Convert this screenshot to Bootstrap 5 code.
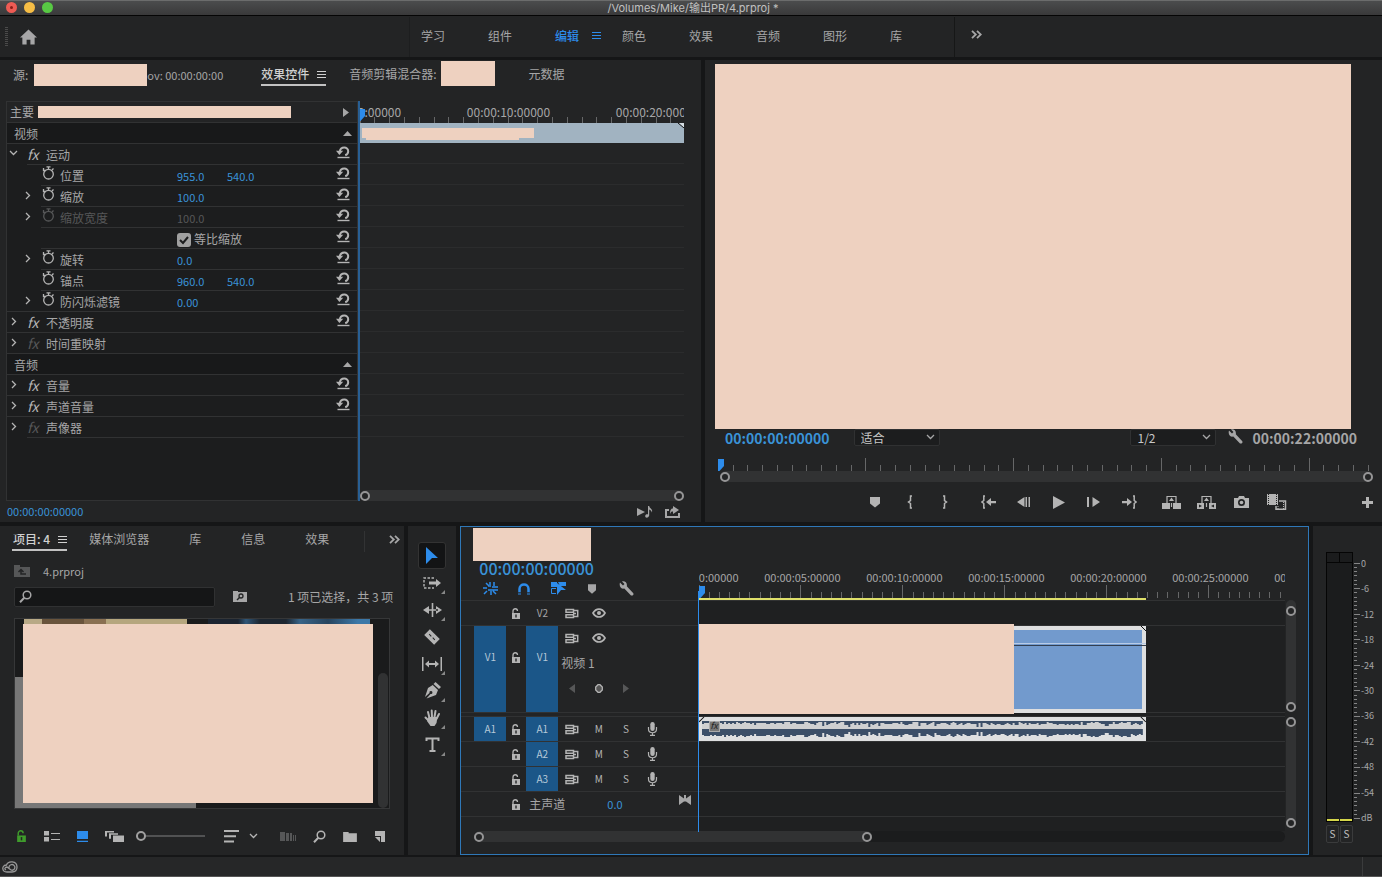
<!DOCTYPE html>
<html lang="zh-CN" data-bs-theme="dark">
<head>
<meta charset="utf-8">
<meta name="viewport" content="width=device-width, initial-scale=1">
<title>4.prproj</title>
<link href="https://cdn.jsdelivr.net/npm/bootstrap@5.3.0/dist/css/bootstrap.min.css" rel="stylesheet">
<style>
:root{--panel:#232425;--gap:#151617;--list:#1c1d1e;--line:#313233;--txt:#a6a6a7;--blue:#2d8ceb;--tc:#3a93d8;--peach:#eed1c0}
body{font:12px/20px "Noto Sans CJK SC","Noto Sans",sans-serif;background:var(--gap);color:var(--txt);min-height:100vh}
button,.tab-link{background:none;border:0;padding:0;color:inherit;font:inherit;line-height:inherit;text-decoration:none;white-space:nowrap;display:inline-flex;align-items:center;justify-content:center}
svg{display:block;flex:none;fill:currentColor}
.ln{fill:none;stroke:currentColor}
.pane{background:var(--panel);min-width:0}
.hide-box{background:var(--peach);display:block;flex:none}
.text-blue{color:var(--blue)}
.head-mark{position:absolute;color:var(--blue);z-index:2}
.ticks{width:100%;stroke:#666768;shape-rendering:crispEdges}
.sbar{height:11px;background:#313233;border-radius:6px}
.knob{width:10px;height:10px;border:2px solid #959596;border-radius:50%;background:var(--panel);display:block;flex:none}
.rule-lab{display:grid;grid-auto-flow:column;justify-items:center;white-space:nowrap}

/* title bar and workspaces */
.title-bar{height:16px;background:linear-gradient(#4b4c4d,#39393a);border-top:1px solid #6b6c6c;border-bottom:1px solid #050505;font-family:Inter,"Noto Sans CJK SC",sans-serif;font-size:11px;line-height:14px;color:#c0c0c0;padding-left:4px}
.dots{position:absolute;left:6px;top:1px;gap:7px}
.dots i{width:11px;height:11px;border-radius:50%;background:#ee5b54}
.dots i:nth-child(2){background:#f6bd45}.dots i:nth-child(3){background:#58c944}
.dots i:first-child{border:4px solid #ee5b54;background:#8d1d17}
.work-bar{height:41px;margin-bottom:3px}
.work-bar .grip{width:3px;height:20px;margin-left:5px;background:repeating-linear-gradient(#4a4a4a 0 1px,transparent 1px 2px)}
.work-list{margin-left:372px;border-left:1px solid #1d1e1f;border-right:1px solid #161717;padding-left:11px;height:40px;width:546px}
.work-list .tab-link{width:67px;flex:0 0 67px;justify-content:flex-start;height:38px;padding-bottom:2px}
.work-list .cur{color:var(--blue);font-weight:500}
.cur svg{margin-left:13px}
.w-more{height:38px}

/* upper row */
.upper{flex:7 0 462px;gap:4px}
.lower{flex:5 0 329px;gap:4px;margin-top:4px}
.fx-pane{flex:701 1 0}.prog-pane{flex:677 1 0}
.tabs{height:41px;padding-top:4px}
.under{border-bottom:2px solid #c2c2c2;color:#d0d0d0;height:22px;font-weight:500}
.t1{padding-left:13px}.t2{margin-left:38px}.t3{margin-left:23px;height:20px}.t4{margin-left:34px}
#rb1{width:113px;height:22px;margin-left:6px}
#rb2{width:54px;height:25px;margin:-3px 0 -2px 4px}
#rb3{width:253px;height:12px;margin-left:4px}
#rb4{width:118px;height:33px;margin:1px 0 0 12px}
.small-tc{font-size:11px}
.prop-list{width:352px;flex:none;margin-left:6px;background:var(--list);border:1px solid var(--line)}
.prop-head{height:21px;border-bottom:1px solid var(--line);background:var(--panel);padding:0 8px 0 3px}
.sec{background:#18191a;height:21px;border-bottom:1px solid var(--line);padding:1px 5px 0 7px}
.prop{height:21px;border-bottom:1px solid transparent}
.prop.full{border-color:var(--line)}
.prop.cut{border:0}
.prop.cut .prop-in{border-bottom:1px solid var(--line)}
.prop>.tw{width:20px;height:18px;padding-right:7px;color:#b4b4b4;flex:none}
.prop.sub>.tw{width:34px;padding:0 0 0 7px}
.prop-in{flex:1;height:21px;padding:1px 7px 0 0;line-height:20px}
.prop-in>.ic{width:19px;flex:none;color:#b4b4b4;font-style:italic;font-size:14px;line-height:18px}
.sub .prop-in>.ic{padding-left:1px}
.prop-in .nm{width:117px}
.prop-in .val{width:50px;font-size:11px;color:var(--tc);line-height:20px}
.prop-in .rst{margin-left:auto;height:14px;color:#b4b4b4}
.dim,.prop-in>.dim,.prop-in .val.dim{color:#565758}
.chk{width:14px;height:14px;margin:4px 3px 0 0;border:0;border-radius:2px;background-color:#a0a0a0!important;float:none}
.chk:checked{background-image:url("data:image/svg+xml,%3Csvg xmlns='http://www.w3.org/2000/svg' viewBox='0 0 14 14'%3E%3Cpath d='M3 7l3 3 5-6' fill='none' stroke='%231c1d1e' stroke-width='2'/%3E%3C/svg%3E")}
.fx-time{margin-right:17px;position:relative;border-left:2px solid #285f94}
.fx-lab{grid-auto-columns:149px;height:14px;line-height:21px;margin-left:-75px}
.fx-clip{height:20px;background:#a1b3c1;padding:5px 0 0 2px;position:relative}
.fx-clip .nick{position:absolute;right:0;top:0}
.fx-rows{flex:1;background:repeating-linear-gradient(transparent 0 20px,#2b2c2d 20px 21px) 0 0/100% 294px no-repeat}
.fx-foot{height:21px;color:var(--tc);font-size:11px;padding:0 21px 0 7px}
.fx-foot button{color:#a6a6a7}
#hm1{left:-1px;top:7px}#hm2{left:-2px;top:2px}#hm3{left:0;bottom:2px}
.screen{flex:1;background:var(--peach);margin:4px 31px 0 10px;min-height:120px}
.bigc{font-weight:700;font-size:14px;line-height:18px}
.sel{height:17px;width:86px;background:#1c1d1e;border:1px solid #303132;border-radius:2px;padding:0 6px;appearance:none;font-size:12px;line-height:15px;color:#c8c8c8;display:block}
.sel-box{position:relative}.sel-box svg{position:absolute;right:5px;top:5px;pointer-events:none}
.seq-col{color:var(--tc);padding-left:20px}
.s1{margin-left:24px}
.prog-row{height:18px;padding-right:25px}
.wr{margin:0 9px 0 12px}
.prog-rule{margin:10px 9px 0 15px}
.trans{height:40px;padding-left:152px}
.trans button{width:35px;height:20px;color:#b4b4b4}
.trans .plus{width:30px}.g8{margin-right:8px}.g9{margin-right:9px}

/* project panel */
.proj{flex:405 1 0}
.p-tabs{padding:3px 4px 0 12px;height:34px}
.p-tabs .pt1{padding-left:1px;margin-right:22px;height:22px}
.pt3{margin-left:40px}.p-more{height:20px}.p-line{width:1px;height:21px;background:#323334;margin:2px 24px 0 auto}
.crumb{padding-left:14px;height:22px}.crumb span{margin-left:13px;font-size:11px}
.find-row{padding:0 11px 0 14px;height:29px;margin-bottom:7px}
.find{width:201px;height:20px;background:#151617;border:1px solid #303132;border-radius:2px}
.find input{background:none;border:0;outline:0;width:170px;color:inherit;height:18px}
.fb{margin-left:18px}
.bin{margin:0 14px;border:1px solid #363738;flex:1;background:#1a1b1c}
.thumbs{height:5px;padding-left:9px}
.th-a{width:163px;height:5px;background:linear-gradient(90deg,#b8a986 0 18px,#69543c 18px 60px,#897052 60px 82px,#b5a67e 82px)}
.th-b{width:162px;height:5px;margin-left:21px;background:linear-gradient(90deg,#1b2430 0 30px,#2f5678 38px,#1d2630 52px 78px,#386488 92px,#27445e 120px,#3c78a8 150px)}
.bin-body{flex:1;background:linear-gradient(#777,#777) 0 53px/8px 100% no-repeat,linear-gradient(#777,#777) 0 100%/181px 5px no-repeat;padding:0 16px 5px 8px;position:relative}
.bin-thumb{position:absolute;right:1px;top:49px;bottom:0;width:10px;border-radius:5px;background:#313233}
.proj-foot{height:46px;padding:8px 19px 0 16px;color:#b4b4b4}
.f-lock{color:#3f9b2c}.fb1,.fb2,.fb4{margin-left:17px}.fb3{margin-left:10px}
.rng{width:69px;height:12px;appearance:none;background:none;margin:0 19px 0 12px}
.rng::-webkit-slider-runnable-track{height:2px;background:#515253}
.rng::-webkit-slider-thumb{appearance:none;width:10px;height:10px;border:2px solid #a0a0a0;border-radius:50%;background:var(--panel);margin-top:-4px}

/* tools */
.toolz{width:48px;flex:none;padding-top:16px}
.toolz button{width:28px;height:27px;color:#b4b4b4;position:relative;border-radius:3px}
.toolz button:not(.on)::after{content:"";position:absolute;right:1px;bottom:2px;border:solid transparent;border-width:2px;border-right-color:#888;border-bottom-color:#888}
.toolz .nt::after{display:none}
.toolz .on{background:#131415;border:1px solid #333;color:var(--blue)}

/* timeline */
.seq{flex:848 1 0;border:1px solid #2f78b8}
.seq-top{height:73px}
.seq-left{width:238px;flex:none}
.seq-tc{font-size:16px;line-height:14px;color:var(--tc);font-weight:500;padding-left:18px}
.seq-btns{padding:6px 0 0 12px}
.seq-btns button{width:34px;height:15px}
.rulez{margin-right:23px}
.tl-lab{grid-auto-columns:102px;margin-left:-50px;font-size:11px;line-height:14px}
.workarea{height:2px;width:76.3%;background:#dfe06a}
.tracks,.lanes{border-top:1px solid var(--line)}
.trk{border-bottom:1px solid var(--line);height:25px}
.tracks .trk{padding-left:13px}
.trk.tall{height:87px}
.trk .cell{width:32px;flex:none;font-size:10px}
.trk .patch{background:#1b5688;color:#b6c9d8;align-self:stretch}
.trk .lock{width:20px;flex:none;color:#b4b4b4}
.trk .b27{width:27px;flex:none;color:#b4b4b4;font-size:10px}
.sep-v{height:4px;border-bottom:1px solid var(--line)}
.v1c{padding-bottom:12px}.v1r{height:24px}.v1n{padding-left:3px;line-height:18px}
.mst{padding-left:3px;width:81px}.mval{color:var(--tc);font-size:11px}.mend{margin:-8px 8px 0 0}
.lanes{background:#1f2021;flex:1;min-width:0}
.phead{position:absolute;left:-1px;top:-10px;width:1px;bottom:-1px;background:var(--blue);z-index:3}
.clip-v{width:76.3%;height:87px;background:#729acd;border:4px solid #dedfe0;position:relative;border-left:0}
.clip-v::after{content:"";position:absolute;left:0;right:-4px;top:13px;height:3px;border-top:1px solid #b8cbe6;border-bottom:1px solid #333f50}
.clip-v .hide-box{position:absolute;left:0;top:-6px;width:315px;height:90px;z-index:1}
.corner{position:absolute;right:-4px;top:-4px}
.clip-a{width:76.3%;height:24px;background:#dedfe0}
.fxb{position:absolute;left:10px;top:4px;width:11px;height:11px;border:1px solid #aaa;background:#777;color:#222;font-size:9px;line-height:8px;font-style:italic}
.vcol{width:12px;flex:none;margin:0 11px 0 0}
.vsb{width:10px;background:#313233;border-radius:5px;margin:0 auto}
.v1s{height:112px;padding-top:6px}.v2s{height:111px;margin-top:5px}
.hsb{margin:0 23px 12px 13px;border-radius:6px;background:#1b1c1d}
.hthumb{width:49%}

/* meters and status */
.meter{width:69px;flex:none}
.mbox{padding:26px 0 0 13px}
.peak{width:27px;height:11px;border:1px solid #050505;background:#1b1c1d}.peak i{flex:1}.peak i:first-child{border-right:1px solid #050505}
.mtr{width:27px;flex:1;border:1px solid #050505;background:#1b1c1d;border-top:0}
.mtr i{flex:1;height:2px;background:#d5d64a}.mtr i+i{margin-left:1px}
#mticks{stroke:#858586;shape-rendering:crispEdges}
.mtr-lab{font-size:9px;line-height:10px;position:relative;flex:1;margin-left:1px}
.mtr-lab span{position:absolute;left:0;white-space:nowrap;transform:translateY(-50%)}
.solo{padding:3px 0 12px 13px;gap:1px}
.solo button{width:13px;height:18px;border:1px solid #3a3b3c;border-radius:2px;font-size:10px;color:#c0c0c0}
.status{height:20px;margin-top:2px;background:#262728;border-bottom:1px solid #555;padding-left:2px;color:#999}
.st-sep{margin:0 19px 0 auto;width:1px;height:19px;background:#3a3b3c}
</style>
</head>
<body class="d-flex flex-column">
<svg width="0" height="0" class="position-absolute" aria-hidden="true">
<symbol id="menu" viewBox="0 0 9 9"><path class="ln" d="M0 1.500h9M0 4.500h9M0 7.500h9"/></symbol>
<symbol id="more" viewBox="0 0 11 9"><path class="ln" stroke-width="1.800" d="M1 .8l3.800 3.700L1 8.200M6 .8l3.800 3.700L6 8.200"/></symbol>
<symbol id="cr" viewBox="0 0 6 9"><path class="ln" stroke-width="1.300" d="M1 1l3.500 3.500L1 8"/></symbol>
<symbol id="cd" viewBox="0 0 9 6"><path class="ln" stroke-width="1.300" d="M1 1l3.500 3.500L8 1"/></symbol>
<symbol id="watch" viewBox="0 0 13 14"><path class="ln" stroke-width="1.300" d="M4.500 .8h4M6.500 1v2M1.500 2v2.500h2M11.500 2.500l-1.500 1.500"/><circle class="ln" stroke-width="1.300" cx="6.500" cy="8.200" r="4.800"/></symbol>
<symbol id="rst" viewBox="0 0 14 13"><path class="ln" stroke-width="2" d="M3.800 5.500C4.500 .3 12.200 .3 12.200 5.200c0 2-1 3.300-3 4"/><path d="M0 4.800h7.200L3.400 9z"/><path d="M1.500 10.800h12v1.400h-12z"/></symbol>
<symbol id="wrench" viewBox="0 0 15 15"><path d="M1 1.500l3 3L5.500 3 3 .5C6 -.3 8.500 2 7.800 5.200l6.500 7c.8 1.500-1 3-2.300 2.200L5.300 7.600C2.500 8.500-.3 5.500 1 1.500z"/></symbol>
<symbol id="mark" viewBox="0 0 10 12"><path d="M0 1h10v6.500L5 11.500 0 7.500z"/></symbol>
<symbol id="pin" viewBox="0 0 7 12"><path d="M0 0h6v7l-4.500 5H0z"/></symbol>
<symbol id="mag" viewBox="0 0 13 13"><circle class="ln" stroke-width="1.500" cx="8" cy="5" r="3.800"/><path class="ln" stroke-width="2" d="M5.300 7.800L1 12.200"/></symbol>
<symbol id="lock" viewBox="0 0 10 11"><path d="M1 5h8v6H1z"/><path class="ln" stroke-width="1.300" d="M2 5V3c0-3 4.500-3 4.500 0"/><path fill="#232425" d="M4.300 6.500h1.400v3H4.300z"/></symbol>
<symbol id="sync" viewBox="0 0 14 11"><path class="ln" stroke-width="1.500" d="M1 1.500h7.500v2.800H1zM1 6.700h7.500v2.800H1zM8 5.500h3M9 2.500h3.700v6H9"/></symbol>
<symbol id="eye" viewBox="0 0 14 10"><path class="ln" stroke-width="1.700" d="M1 5C4-.3 10-.3 13 5 10 10.300 4 10.300 1 5z"/><circle cx="7" cy="5" r="2"/></symbol>
<symbol id="mic" viewBox="0 0 11 14"><rect x="3.300" y="0" width="4.400" height="9" rx="2.200"/><path class="ln" stroke-width="1.200" d="M1.500 5v2c0 5 8 5 8 0V5M5.500 11v2M3 13.400h5"/></symbol>
<symbol id="folder" viewBox="0 0 15 12"><path d="M0 1h6v1.500h9V12H0z"/></symbol>
</svg>

<header class="title-bar position-relative text-center">
  <div class="dots d-flex"><i></i><i></i><i></i></div>
  <span>/Volumes/Mike/输出PR/4.prproj *</span>
</header>

<nav class="work-bar pane d-flex align-items-center">
  <span class="grip"></span>
  <button class="ms-2" aria-label="主页"><svg class="ms-1" width="17" height="16" viewBox="0 0 18 16"><path d="M9 0l9 8.500h-2.500V16h-4.500v-5H7v5H2.500V8.500H0z"/></svg></button>
  <div class="work-list d-flex align-items-center">
    <a class="tab-link" href="#">学习</a><a class="tab-link" href="#">组件</a>
    <a class="tab-link cur" href="#">编辑<svg width="9" height="9"><use href="#menu"/></svg></a>
    <a class="tab-link" href="#">颜色</a><a class="tab-link" href="#">效果</a><a class="tab-link" href="#">音频</a><a class="tab-link" href="#">图形</a><a class="tab-link" href="#">库</a>
  </div>
  <button class="ms-3 w-more" aria-label="更多"><svg class="mb-1" width="11" height="9"><use href="#more"/></svg></button>
</nav>

<main class="upper d-flex">
  <section class="fx-pane pane d-flex flex-column">
    <div class="tabs d-flex align-items-start">
      <a class="tab-link t1" href="#">源:<span class="hide-box" id="rb1"></span><span class="small-tc">ov: 00:00:00:00</span></a>
      <a class="tab-link under t2" href="#">效果控件<svg class="ms-2" width="9" height="9"><use href="#menu"/></svg></a>
      <a class="tab-link t3" href="#">音频剪辑混合器:<span class="hide-box" id="rb2"></span></a>
      <a class="tab-link t4" href="#">元数据</a>
    </div>
    <div class="d-flex flex-grow-1">
      <div class="prop-list">
        <div class="prop-head d-flex align-items-center">主要<span class="hide-box" id="rb3"></span><svg class="ms-auto" width="6" height="9" viewBox="0 0 6 9"><path d="M0 0l6 4.500L0 9z"/></svg></div>
        <div class="sec d-flex align-items-center">视频<svg class="ms-auto" width="9" height="5" viewBox="0 0 9 5"><path d="M4.500 0L9 5H0z"/></svg></div>
        <div id="vprops"></div>
        <div class="sec d-flex align-items-center">音频<svg class="ms-auto" width="9" height="5" viewBox="0 0 9 5"><path d="M4.500 0L9 5H0z"/></svg></div>
        <div id="aprops"></div>
      </div>
      <div class="fx-time flex-grow-1 d-flex flex-column overflow-hidden">
        <svg class="head-mark" id="hm1" width="7" height="14"><use href="#pin"/></svg>
        <div class="rule-lab fx-lab"><span>00:00:00:00000</span><span>00:00:10:00000</span><span>00:00:20:00000</span></div>
        <svg class="ticks" height="8" data-start="0" data-step="14.800" data-total="324" data-major="0"></svg>
        <div class="fx-clip"><svg width="172" height="12"><path fill="#eed1c0" d="M0 0h172v10h-15v2H4v-2H0z"/></svg><svg class="nick" width="6" height="5" viewBox="0 0 6 5"><path fill="#d5dde2" d="M1 0h5v5z"/><path stroke="#111" d="M0 0l6 5"/></svg></div>
        <div class="fx-rows"></div>
        <div class="sbar d-flex justify-content-between align-items-center"><span class="knob"></span><span class="knob"></span></div>
      </div>
    </div>
    <div class="fx-foot d-flex justify-content-between"><span>00:00:00:00000</span>
      <span class="d-flex gap-2 align-items-center">
        <button aria-label="播放音频"><svg width="16" height="12" viewBox="0 0 16 12"><path d="M0 2l8 4-8 4zM11 0h1.200c0 2.500 4.300 3 2.500 6.500 0-2-1.500-2.500-2.500-3v6c-1 3-4 2.500-4 .8s1.500-2.300 2.800-1.800z"/></svg></button>
        <button class="ms-1" aria-label="导出"><svg width="15" height="12" viewBox="0 0 15 12"><path class="ln" stroke-width="2" d="M4 4H1v7h13V7"/><path d="M8 0l6 4-6 4V5.500C6 5.500 6 6 5 8c0-4 1-5.500 3-5.500z"/></svg></button>
      </span></div>
  </section>

  <section class="prog-pane pane d-flex flex-column">
    <div class="screen"></div>
    <div class="d-flex align-items-start prog-row">
      <span class="bigc seq-col">00:00:00:00000</span>
      <span class="sel-box s1"><select class="sel" aria-label="缩放级别"><option>适合</option></select><svg width="9" height="6"><use href="#cd"/></svg></span>
      <span class="sel-box ms-auto"><select class="sel" aria-label="回放分辨率"><option>1/2</option></select><svg width="9" height="6"><use href="#cd"/></svg></span>
      <button class="wr" aria-label="设置"><svg width="15" height="15"><use href="#wrench"/></svg></button>
      <span class="bigc">00:00:22:00000</span>
    </div>
    <div class="prog-rule position-relative">
      <svg class="head-mark" id="hm2" width="7" height="12"><use href="#pin"/></svg>
      <svg class="ticks" height="14" data-start="13" data-step="14.770" data-total="653" data-major="10" data-first="9"></svg>
      <div class="sbar d-flex justify-content-between align-items-center"><span class="knob"></span><span class="knob"></span></div>
    </div>
    <div class="trans d-flex align-items-center">
      <button aria-label="添加标记"><svg width="10" height="12"><use href="#mark"/></svg></button>
      <button aria-label="标记入点"><svg width="6" height="14" viewBox="0 0 6 14"><path class="ln" stroke-width="1.500" d="M5 1H3.500v4.500L1.500 7l2 1.500V13H5"/></svg></button>
      <button class="g9" aria-label="标记出点"><svg width="6" height="14" viewBox="0 0 6 14"><path class="ln" stroke-width="1.500" d="M1 1h1.500v4.500l2 1.500-2 1.500V13H1"/></svg></button>
      <button aria-label="转到入点"><svg width="16" height="14" viewBox="0 0 16 14"><path class="ln" stroke-width="1.500" d="M4 1H2.800v4.500L1 7l1.800 1.500V13H4"/><path d="M5 7l5-4v3h5v2.300h-5V11z"/></svg></button>
      <button aria-label="后退一帧"><svg width="13" height="12" viewBox="0 0 13 12"><path d="M0 6l7.500-5v10zM8.500 1H10v10H8.500zM11.500 1H13v10h-1.500z"/></svg></button>
      <button aria-label="播放"><svg width="12" height="13" viewBox="0 0 12 13"><path d="M0 0l12 6.500L0 13z"/></svg></button>
      <button aria-label="前进一帧"><svg width="13" height="12" viewBox="0 0 13 12"><path d="M13 6L5.500 1v10zM0 1h2v10H0z"/></svg></button>
      <button class="g8" aria-label="转到出点"><svg width="16" height="14" viewBox="0 0 16 14"><path class="ln" stroke-width="1.500" d="M12 1h1.200v4.500L15 7l-1.800 1.500V13H12"/><path d="M11 7L6 3v3H1v2.300h5V11z"/></svg></button>
      <button aria-label="提升"><svg width="19" height="15" viewBox="0 0 19 15"><path d="M0 8h8v6H0zM11 8h8v6h-8z"/><path class="ln" stroke-width="1.200" d="M5 8V1.500h9V8M9.500 8v4"/><path d="M7 6l2.500-3.500L12 6z"/></svg></button>
      <button aria-label="提取"><svg width="19" height="15" viewBox="0 0 19 15"><path fill-rule="evenodd" d="M0 8h7v6H0zM12 8h7v6h-7zM2 9.500v3L5 11zM17 9.500v3L14 11z"/><path class="ln" stroke-width="1.200" d="M5 8V1.500h9V8M9.500 8v4"/><path d="M7 6l2.500-3.500L12 6z"/></svg></button>
      <button aria-label="导出帧"><svg width="15" height="12" viewBox="0 0 15 12"><path fill-rule="evenodd" d="M0 2h4l1-2h5l1 2h4v10H0zM7.500 3a3.500 3.500 0 100 7 3.500 3.500 0 000-7z"/><circle cx="7.500" cy="6.500" r="1.800"/></svg></button>
      <button aria-label="比较视图"><svg width="20" height="16" viewBox="0 0 20 16"><path d="M0 0h11v11H0z"/><path stroke="#232425" stroke-dasharray="1 1" d="M1.500 0v11M9.500 0v11"/><path class="ln" stroke-width="1.500" d="M12 7h6.500v8.200H9V12"/><path class="ln" stroke-dasharray="1 1" d="M16.500 8v7M11 12v3"/></svg></button>
      <button class="ms-auto plus" aria-label="按钮编辑器"><svg width="11" height="11" viewBox="0 0 11 11"><path d="M4 0h3v4h4v3H7v4H4V7H0V4h4z"/></svg></button>
    </div>
  </section>
</main>

<div class="lower d-flex">
  <section class="proj pane d-flex flex-column">
    <div class="d-flex align-items-start p-tabs">
      <a class="tab-link under pt1" href="#">项目: 4<svg class="ms-2" width="9" height="9"><use href="#menu"/></svg></a>
      <a class="tab-link" href="#">媒体浏览器</a><a class="tab-link pt3" href="#">库</a><a class="tab-link pt3" href="#">信息</a><a class="tab-link pt3" href="#">效果</a>
      <span class="p-line"></span>
      <button class="p-more" aria-label="更多"><svg width="11" height="9"><use href="#more"/></svg></button>
    </div>
    <div class="d-flex align-items-center crumb"><svg class="dim" width="16" height="12" viewBox="0 0 16 12"><path d="M0 0h6v2h10v10H0z"/><path fill="none" stroke="#232425" stroke-width="1.500" d="M12 9H7V5M4.500 7L7 4.500 9.500 7"/></svg><span>4.prproj</span></div>
    <div class="d-flex align-items-center find-row">
      <label class="find d-flex align-items-center"><svg class="mx-1" width="13" height="13"><use href="#mag"/></svg><input type="text" aria-label="搜索"></label>
      <button class="fb" aria-label="新建搜索素材箱"><svg width="14" height="11" viewBox="0 0 14 11"><path d="M0 0h5v1h9v10H0z"/><circle cx="8" cy="5" r="2" fill="none" stroke="#232425" stroke-width="1.300"/><path stroke="#232425" stroke-width="1.500" d="M6.500 6.500L4 9"/></svg></button>
      <span class="ms-auto">1 项已选择，共 3 项</span>
    </div>
    <div class="bin d-flex flex-column">
      <div class="thumbs d-flex"><div class="th-a"></div><div class="th-b"></div></div>
      <div class="bin-body d-flex"><div class="hide-box flex-grow-1"></div><span class="bin-thumb"></span></div>
    </div>
    <div class="proj-foot d-flex align-items-center">
      <button class="f-lock" aria-label="锁定"><svg width="11" height="12" viewBox="0 0 10 11"><use href="#lock"/></svg></button>
      <button class="fb1" aria-label="列表视图"><svg width="16" height="11" viewBox="0 0 16 11"><path d="M0 0h5v4.500H0zM0 6h5v4.500H0zM7 2h9v1H7zM7 8h9v1H7z"/></svg></button>
      <button class="fb2 text-blue" aria-label="图标视图"><svg width="11" height="11" viewBox="0 0 11 11"><path d="M0 0h11v8H0zM0 9.700h11V11H0z"/></svg></button>
      <button class="fb2" aria-label="自由变换视图"><svg width="19" height="11" viewBox="0 0 19 11"><path d="M0 0h9v1.500H2v4H0zM4 2.200h9v1.500H6v4H4zM8 4.500h11V11H8z"/></svg></button>
      <input class="rng" type="range" min="0" max="100" value="0" aria-label="缩略图大小">
      <button aria-label="排序"><svg width="15" height="13" viewBox="0 0 15 13"><path d="M0 0h15v2H0zM0 5.300h12v2H0zM0 10.500h10v2H0z"/></svg></button>
      <button class="fb3" aria-label="排序选项"><svg width="9" height="6"><use href="#cd"/></svg></button>
      <button class="ms-auto dim" aria-label="自动匹配序列"><svg width="16" height="9" viewBox="0 0 16 9"><path d="M0 0h5v9H0zM6 1h3v8H6zM10 1h2v8h-2zM13 3h1v6h-1zM15 3h1v6h-1z"/></svg></button>
      <button class="fb4" aria-label="查找"><svg width="13" height="13"><use href="#mag"/></svg></button>
      <button class="fb4" aria-label="新建素材箱"><svg width="14" height="11"><use href="#folder"/></svg></button>
      <button class="fb4" aria-label="新建项"><svg width="11" height="11" viewBox="0 0 11 11"><path d="M1 0h10v11H7V5H1zM1 6h5v5z"/></svg></button>
    </div>
  </section>

  <aside class="toolz pane d-flex flex-column align-items-center">
    <button class="on" aria-label="选择"><svg width="12" height="17" viewBox="0 0 12 17"><path d="M0 0l12 11H6l-6 6z"/></svg></button>
    <button aria-label="向前选择轨道"><svg width="19" height="12" viewBox="0 0 19 12"><path class="ln" stroke-width="1.400" stroke-dasharray="2.500 1.500" d="M11 1H1v10h10"/><path d="M6 4.500h7V2l5 4-5 4V7.500H6z"/></svg></button>
    <button aria-label="波纹编辑"><svg width="19" height="14" viewBox="0 0 19 14"><path d="M8.700 0h1.600v14H8.700zM0 7l6-4v8zM19 7l-6-4v8zM4 6.200h11v1.600H4z"/></svg></button>
    <button class="nt" aria-label="剃刀"><svg width="16" height="16" viewBox="0 0 16 16"><g transform="rotate(45 8 8)"><path fill-rule="evenodd" d="M1 4h14v8H1zM4 7.500v1h3v-1zM9 7.500v1h3v-1z"/></g></svg></button>
    <button aria-label="外滑"><svg width="20" height="14" viewBox="0 0 20 14"><path d="M0 0h1.500v14H0zM18.500 0H20v14h-1.500zM3 7l4-3.500V6h6V3.500L17 7l-4 3.500V8H7v2.500z"/></svg></button>
    <button aria-label="钢笔"><svg width="17" height="17" viewBox="0 0 17 17"><path d="M11.500 0L17 5l-2 2-5.500-5zM8.700 3l5.300 5-2 5L2.500 16.500 6.500 12a1.500 1.500 0 10-1-1L1 15l3-9z"/></svg></button>
    <button aria-label="手形"><svg width="17" height="17" viewBox="0 0 17 17"><path class="ln" stroke-width="2" stroke-linecap="round" d="M5.500 9L4 3M8 8l-.3-6.500M10.500 8L11.500 2M12.700 9.500L15 5M5 12L1.500 8.500"/><path d="M4.500 8h9l-1 6-2 3h-4l-3.500-5z"/></svg></button>
    <button aria-label="文字"><svg width="15" height="15" viewBox="0 0 15 15"><path class="ln" stroke-width="2" d="M1.500 4V1.500h12V4M7.500 1.500v12M4.500 14h6"/></svg></button>
  </aside>

  <section class="seq pane d-flex flex-column">
    <div class="seq-top d-flex">
      <div class="seq-left d-flex flex-column">
        <span class="hide-box" id="rb4"></span>
        <div class="seq-tc">00:00:00:00000</div>
        <div class="d-flex seq-btns">
          <button class="text-blue" aria-label="嵌套"><svg width="15" height="13" viewBox="0 0 15 13"><path class="ln" stroke-width="1.500" d="M0 6h4M5 8h10M5 4h3M9 5h6M7 0v3M3 1l3 3M11 0v4M4 9l-3 3M8 9v4M10 9l3 3"/></svg></button>
          <button class="text-blue" aria-label="对齐"><svg width="12" height="12" viewBox="0 0 12 12"><path class="ln" stroke-width="2.500" d="M1.500 9V6c0-6 9-6 9 0v3"/><path opacity=".5" d="M0 9.500h3V12H0zM9 9.500h3V12H9z"/></svg></button>
          <button class="text-blue" aria-label="链接选择项"><svg width="15" height="13" viewBox="0 0 15 13"><path d="M0 0h6v5H0zM7 0h8v4H9zM6 1l9 7h-5l-4 5z"/><path class="ln" d="M5 6.500H.5v5H5"/></svg></button>
          <button aria-label="标记"><svg width="8" height="10" viewBox="0 0 10 12"><path d="M0 0h10v7.500L5 12 0 7.500z"/></svg></button>
          <button aria-label="时间轴设置"><svg width="15" height="15"><use href="#wrench"/></svg></button>
        </div>
      </div>
      <div class="rulez flex-grow-1 overflow-hidden position-relative d-flex flex-column">
        <svg class="head-mark" id="hm3" width="7" height="12"><use href="#pin"/></svg>
        <div class="rule-lab tl-lab mt-auto"><span>00:00:00:00000</span><span>00:00:05:00000</span><span>00:00:10:00000</span><span>00:00:15:00000</span><span>00:00:20:00000</span><span>00:00:25:00000</span><span>00:00:30:00000</span></div>
        <svg class="ticks" height="14" data-start="0" data-step="10.200" data-total="586" data-major="10"></svg>
        <div class="workarea"></div>
      </div>
    </div>
    <div class="d-flex flex-grow-1">
      <div class="seq-left tracks">
        <div class="trk d-flex align-items-center"><span class="cell"></span><button class="lock" aria-label="锁定"><svg width="10" height="11"><use href="#lock"/></svg></button><button class="cell">V2</button><button class="b27" aria-label="同步锁定"><svg width="14" height="11"><use href="#sync"/></svg></button><button class="b27" aria-label="切换轨道输出"><svg width="14" height="10"><use href="#eye"/></svg></button></div>
        <div class="trk tall d-flex">
          <button class="cell patch pb-4">V1</button><button class="lock pb-4" aria-label="锁定"><svg width="10" height="11"><use href="#lock"/></svg></button><button class="cell patch pb-4">V1</button>
          <div class="d-flex flex-column justify-content-between v1c">
            <div class="d-flex v1r"><button class="b27" aria-label="同步锁定"><svg width="14" height="11"><use href="#sync"/></svg></button><button class="b27" aria-label="切换轨道输出"><svg width="14" height="10"><use href="#eye"/></svg></button></div>
            <span class="v1n">视频 1</span>
            <div class="d-flex v1r"><button class="b27" aria-label="上一关键帧"><svg class="dim" width="6" height="9" viewBox="0 0 6 9"><path d="M6 0v9L0 4.500z"/></svg></button><button class="b27" aria-label="添加关键帧"><svg width="8" height="9" viewBox="0 0 8 9"><path stroke="currentColor" fill="#555" stroke-width="1.300" d="M3 .7h2L7.300 3v3L5 8.300H3L.7 6V3z"/></svg></button><button class="b27" aria-label="下一关键帧"><svg class="dim" width="6" height="9" viewBox="0 0 6 9"><path d="M0 0v9l6-4.500z"/></svg></button></div>
          </div>
        </div>
        <div class="sep-v"></div>
        <div id="atracks"></div>
        <div class="trk d-flex align-items-center"><span class="cell"></span><button class="lock" aria-label="锁定"><svg width="10" height="11"><use href="#lock"/></svg></button><span class="mst">主声道</span><span class="mval">0.0</span><svg class="ms-auto mend" width="12" height="10" viewBox="0 0 12 10"><path d="M0 0l5 3.500V0h2v3.500L12 0v10L7 6.500H5L0 10z"/></svg></div>
      </div>
      <div class="lanes position-relative">
        <span class="phead"></span>
        <div class="trk"></div>
        <div class="trk tall"><div class="clip-v"><span class="hide-box"></span><svg class="corner" width="5" height="5" viewBox="0 0 5 5"><path stroke="#111" d="M0 0l5 5"/></svg></div></div>
        <div class="sep-v"></div>
        <div class="trk"><div class="clip-a position-relative"><svg id="wave" width="100%" height="24" viewBox="0 0 446 24" preserveAspectRatio="none"></svg><span class="fxb">fx</span></div></div>
        <div class="trk"></div><div class="trk"></div><div class="trk"></div>
      </div>
      <div class="vcol d-flex flex-column">
        <div class="vsb v1s d-flex flex-column justify-content-between"><span class="knob"></span><span class="knob"></span></div>
        <div class="vsb v2s d-flex flex-column justify-content-between"><span class="knob"></span><span class="knob"></span></div>
      </div>
    </div>
    <div class="hsb"><div class="sbar hthumb d-flex justify-content-between align-items-center"><span class="knob"></span><span class="knob"></span></div></div>
  </section>

  <aside class="meter pane d-flex flex-column">
    <div class="d-flex flex-grow-1 mbox">
      <div class="d-flex flex-column"><div class="peak d-flex"><i></i><i></i></div><div class="mtr d-flex align-items-end"><i></i><i></i></div></div>
      <svg id="mticks" width="7" height="100%"></svg>
      <div class="mtr-lab" id="mlab"></div>
    </div>
    <div class="solo d-flex"><button>S</button><button>S</button></div>
  </aside>
</div>

<footer class="status d-flex align-items-center"><svg width="16" height="12" viewBox="0 0 16 12"><path class="ln" stroke-width="1.300" d="M5 11C-.5 11-.5 4 4.500 4 6-.5 15-.5 15 6c0 3-2 5-5 5zM4 9c-2-1-1-3 1-3l4 3c3 1 4.500-2 3.500-4-2-3-6-1-5.500 2"/></svg><span class="st-sep"></span></footer>

<script src="https://cdn.jsdelivr.net/npm/bootstrap@5.3.0/dist/js/bootstrap.bundle.min.js"></script>
<script>
const NS = 'http://www.w3.org/2000/svg';
const icon = (id, w, h, c = '') => `<svg class="${c}" width="${w}" height="${h}"><use href="#${id}"/></svg>`;
// Effect properties
function prop(p) {
  const dim = p.dim ? 'dim' : '', off = p.off ? 'dim' : '';
  const tw = p.tw === 0 ? '<span class="tw"></span>'
    : `<button class="tw" aria-label="${p.open ? '折叠' : '展开'}">${p.open ? icon('cd', 9, 6) : icon('cr', 6, 9)}</button>`;
  const head = p.check ? `<span class="ic"></span><span class="nm"></span><input class="form-check-input chk" type="checkbox" id="uni" checked><label for="uni">${p.n}</label>`
    : p.v ? `<span class="ic ${dim}">${icon('watch', 13, 14)}</span><span class="nm ${dim}">${p.n}</span>` + p.v.map(v => `<span class="val ${dim}">${v}</span>`).join('')
    : `<i class="ic ${off}">fx</i><span>${p.n}</span>`;
  const rst = p.off ? '' : `<button class="rst" aria-label="重置">${icon('rst', 14, 13)}</button>`;
  return `<div class="prop d-flex ${p.v || p.check ? 'sub' : ''} ${p.full ? 'full' : 'cut'}">${tw}<div class="prop-in d-flex">${head}${rst}</div></div>`;
}
document.getElementById('vprops').innerHTML = [
  {n: '运动', open: 1}, {n: '位置', tw: 0, v: ['955.0', '540.0']}, {n: '缩放', v: ['100.0']}, {n: '缩放宽度', v: ['100.0'], dim: 1},
  {n: '等比缩放', tw: 0, check: 1}, {n: '旋转', v: ['0.0']}, {n: '锚点', tw: 0, v: ['960.0', '540.0']},
  {n: '防闪烁滤镜', v: ['0.00'], full: 1}, {n: '不透明度', full: 1}, {n: '时间重映射', off: 1, full: 1}].map(prop).join('');
document.getElementById('aprops').innerHTML = [{n: '音量', full: 1}, {n: '声道音量', full: 1}, {n: '声像器', off: 1}].map(prop).join('');
// Audio track headers
document.getElementById('atracks').innerHTML = ['A1', 'A2', 'A3'].map((t, i) => `<div class="trk d-flex align-items-center">
  ${i ? '<span class="cell"></span>' : '<button class="cell patch">A1</button>'}<button class="lock" aria-label="锁定">${icon('lock', 10, 11)}</button><button class="cell patch">${t}</button><button class="b27" aria-label="同步锁定">${icon('sync', 14, 11)}</button><button class="b27">M</button><button class="b27">S</button><button class="b27" aria-label="录音">${icon('mic', 11, 14)}</button></div>`).join('');
function line(svg, x1, y1, x2, y2) {
  const l = document.createElementNS(NS, 'line');
  Object.entries({x1, y1, x2, y2}).forEach(([k, v]) => l.setAttribute(k, v));
  svg.append(l);
}
// Time rulers: tick positions as a share of the visible time range
document.querySelectorAll('.ticks').forEach(s => {
  const d = s.dataset, h = +s.getAttribute('height'), major = +d.major, first = +(d.first || 0);
  for (let i = 0, x = +d.start; x < +d.total; i++, x += +d.step) {
    const p = x / d.total * 100 + '%';
    line(s, p, major && (i - first) % major === 0 ? 1 : h - 6, p, h);
  }
});
// Audio meter scale in dB
const mt = document.getElementById('mticks'), ml = document.getElementById('mlab');
for (let i = 0; i <= 60; i++) { const p = (11 + i * 4.26) / 270 * 100 + '%'; line(mt, 1, p, i % 6 ? 4 : 7, p); }
[0, -6, -12, -18, -24, -30, -36, -42, -48, -54, 'dB'].forEach((t, i) => {
  const e = document.createElement('span');
  e.textContent = t; e.style.top = (12 + i * 25.4) / 270 * 100 + '%'; ml.append(e);
});
// Stereo waveform
let seed = 7; const rnd = () => (seed = seed * 16807 % 2147483647) / 2147483647;
let a = 'M3 4', b = 'M3 12';
for (let x = 3; x < 442; x += 2) {
  const q = 1 + Math.round(rnd() * (x > 110 ? 3 : 2) + (rnd() > .92 ? 2 : 0));
  a += `V${4 + q}h2`; b += `V${21 - q}h2`;
}
document.getElementById('wave').innerHTML = `<path fill="#cfd0d1" d="M3 4h439v8H3z"/><path fill="#3c4f68" d="${a}V4z"/><path fill="#3c4f68" d="${b}V12z"/><path stroke="#111" d="M0 5L5 0M441 0l5 5"/>`;
</script>
</body>
</html>
